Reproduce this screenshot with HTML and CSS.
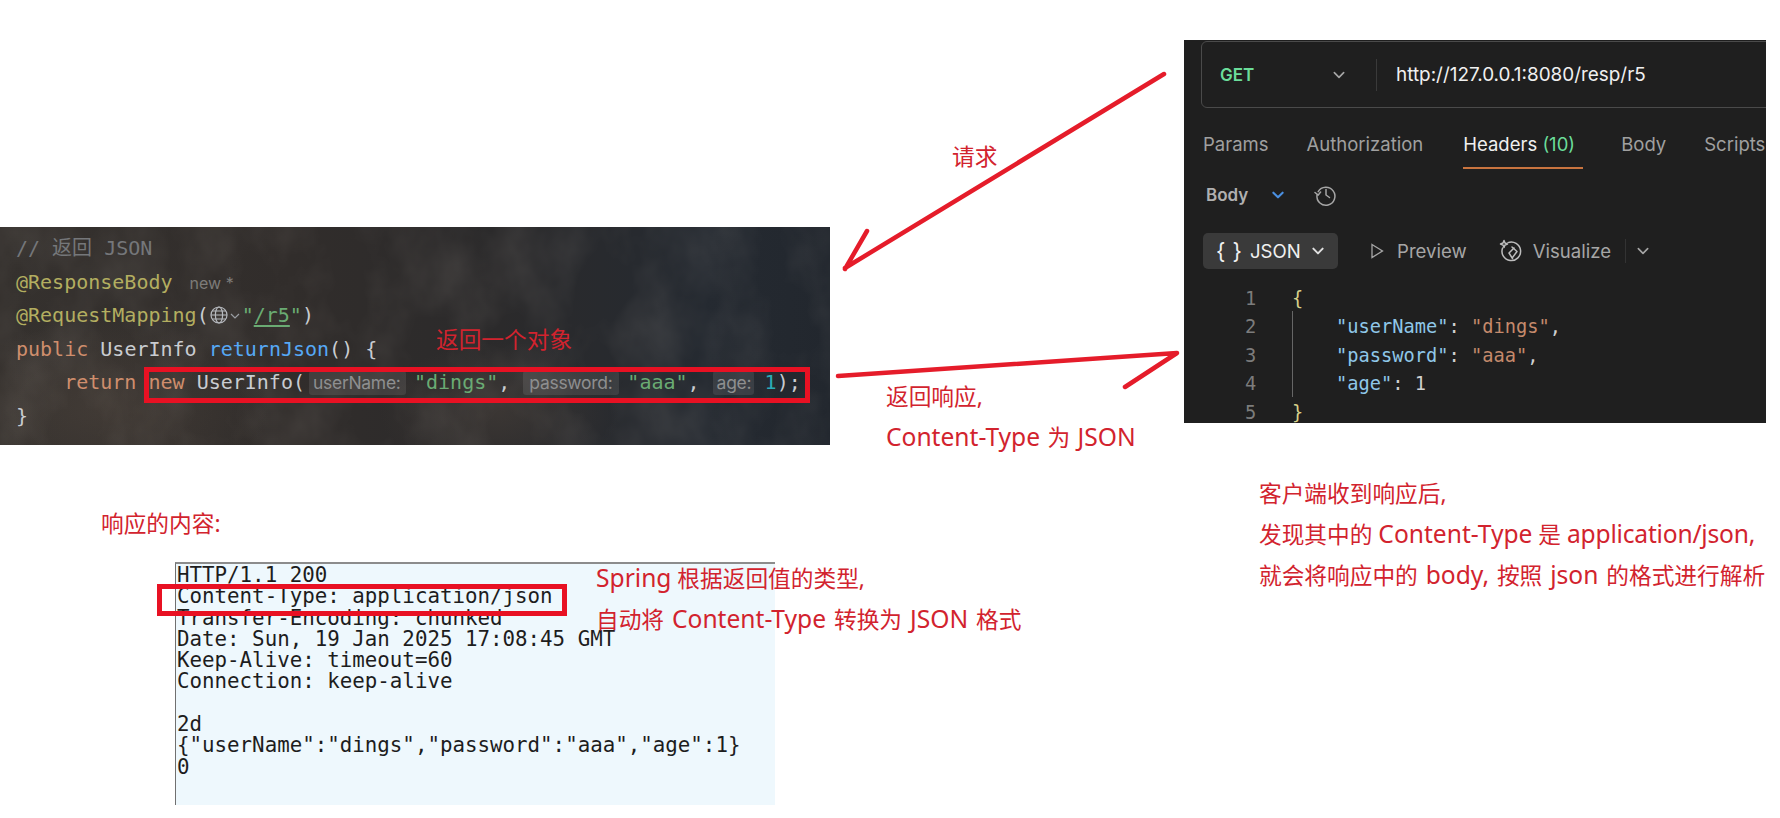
FILE: index.html
```html
<!DOCTYPE html>
<html lang="zh-CN">
<head>
<meta charset="utf-8">
<title>Spring JSON 响应</title>
<link rel="stylesheet" href="styles.css">
</head>
<body>
<main class="canvas">

  <section class="ide">
    <svg class="fur" width="830" height="218">
      <filter id="furnoise" x="0" y="0" width="100%" height="100%">
        <feTurbulence type="fractalNoise" baseFrequency="0.016 0.012" numOctaves="4" seed="7"/>
        <feColorMatrix type="matrix" values="0 0 0 0 0.62  0 0 0 0 0.56  0 0 0 0 0.50  1.6 0 0 0 -0.62"/>
      </filter>
      <rect width="830" height="218" filter="url(#furnoise)"/>
    </svg>
    <div class="ln"><span class="cm">// 返回 JSON</span></div>
    <div class="ln"><span class="an">@ResponseBody</span><span class="author">new *</span></div>
    <div class="ln"><span class="an">@RequestMapping</span><span class="tx">(</span><svg class="globe" viewBox="0 0 20 20"><circle cx="10" cy="10" r="8"/><ellipse cx="10" cy="10" rx="3.6" ry="8"/><path d="M2 10h16M3.2 6h13.6M3.2 14h13.6"/></svg><svg class="mini" viewBox="0 0 12 12"><path d="M2 4l4 4 4-4"/></svg><span class="st">"<u>/r5</u>"</span><span class="tx">)</span></div>
    <div class="ln"><span class="kw">public</span> <span class="tx">UserInfo</span> <span class="fn">returnJson</span><span class="tx">() {</span></div>
    <div class="ln"><span class="kw">    return new</span> <span class="tx">UserInfo(</span><span class="hint h1">userName:</span><span class="st">"dings"</span><span class="tx">,</span><span class="hint h2">password:</span><span class="st">"aaa"</span><span class="tx">,</span><span class="hint h3">age:</span><span class="nu">1</span><span class="tx">);</span></div>
    <div class="ln"><span class="tx">}</span></div>
  </section>

  <section class="postman">
    <div class="urlbar">
      <span class="method">GET</span>
      <svg class="chev chev-get" viewBox="0 0 12 12"><path d="M2 4l4 4 4-4"/></svg>
      <span class="urlsep"></span>
      <span class="url">http://127.0.0.1:8080/resp/r5</span>
    </div>
    <nav class="tabs">
      <span class="tab t-params">Params</span>
      <span class="tab t-auth">Authorization</span>
      <span class="tab t-head">Headers <em>(10)</em></span>
      <span class="tab t-body">Body</span>
      <span class="tab">Scripts</span>
    </nav>
    <div class="bodyrow">
      <span class="bodylabel">Body</span>
      <svg class="chev chev-blue" viewBox="0 0 12 12"><path d="M2 4l4 4 4-4"/></svg>
      <svg class="history" viewBox="0 0 24 24"><path d="M4.2 8.6A9 9 0 1 1 3 12"/><path d="M1 9.5l3.2 2.6L6.6 9"/><path d="M12 6.5V12l3.5 2.5"/></svg>
    </div>
    <div class="viewrow">
      <span class="jsonbtn"><span class="braces">{ }</span> JSON <svg class="chev chev-json" viewBox="0 0 12 12"><path d="M2 4l4 4 4-4"/></svg></span>
      <svg class="play" viewBox="0 0 16 16"><path d="M3 1.500l10.500 6.500L3 14.500z"/></svg>
      <span class="viewopt v-prev">Preview</span>
      <svg class="viz" viewBox="0 0 24 24"><path d="M9 3.600A9.300 9.300 0 1 1 3.600 9"/><path d="M15 9l-5 5 3.500 5.500"/><path d="M13 8l5 4.500-4.500 6"/><path d="M5 1.500l1 2.500 2.500 1-2.500 1-1 2.500-1-2.500-2.500-1 2.500-1z"/></svg>
      <span class="viewopt">Visualize</span>
      <span class="viewsep"></span>
      <svg class="chev chev-view" viewBox="0 0 12 12"><path d="M2 4l4 4 4-4"/></svg>
    </div>
    <div class="jsoncode">
      <div class="jl"><span class="num">1</span><span class="br">{</span></div>
      <div class="jl"><span class="num">2</span><span class="ind"><span class="key">"userName"</span><span class="pl">: </span><span class="sv">"dings"</span><span class="pl">,</span></span></div>
      <div class="jl"><span class="num">3</span><span class="ind"><span class="key">"password"</span><span class="pl">: </span><span class="sv">"aaa"</span><span class="pl">,</span></span></div>
      <div class="jl"><span class="num">4</span><span class="ind"><span class="key">"age"</span><span class="pl">: 1</span></span></div>
      <div class="jl"><span class="num">5</span><span class="br">}</span></div>
      <span class="guide"></span>
    </div>
  </section>

  <pre class="raw">HTTP/1.1 200
Content-Type: application/json
Transfer-Encoding: chunked
Date: Sun, 19 Jan 2025 17:08:45 GMT
Keep-Alive: timeout=60
Connection: keep-alive

2d
{"userName":"dings","password":"aaa","age":1}
0</pre>

  <div class="box box-code"></div>
  <div class="box box-raw"></div>

  <svg class="arrows" viewBox="0 0 1780 818">
    <path d="M1164 74L845 268M867 231L845 269"/>
    <path d="M838 376L1177 353L1125 387"/>
  </svg>

  <p class="note n-obj">返回一个对象</p>
  <p class="note n-req">请求</p>
  <p class="note n-resp">返回响应,<br><span class="mid"><span class="lat">Content-Type</span> 为 <span class="lat">JSON</span></span></p>
  <p class="note n-body">响应的内容:</p>
  <p class="note n-spring"><span class="lat">Spring</span> 根据返回值的类型,<br><span class="wide">自动将 <span class="lat">Content-Type</span> 转换为 <span class="lat">JSON</span> 格式</span></p>
  <p class="note n-client">客户端收到响应后,<br>发现其中的 <span class="lat">Content-Type</span> 是 <span class="lat tight">application/json,</span><br><span class="wide">就会将响应中的 <span class="lat">body,</span> 按照 <span class="lat">json</span> 的格式进行解析</span></p>

</main>
</body>
</html>
```
FILE: styles.css
```css
* { box-sizing: border-box; }
html, body { margin: 0; padding: 0; background: #fff; }
.canvas { position: relative; width: 1780px; height: 818px; overflow: hidden; background: #fff; }

/* IDE screenshot */
.ide {
  position: absolute; left: 0; top: 227px; width: 830px; height: 218px;
  padding: 5px 0 0 16px;
  font: 20px/33.6px "DejaVu Sans Mono", "Noto Sans CJK SC", monospace;
  background:
    radial-gradient(ellipse 120px 70px at 500px 185px, rgba(74,66,60,.5), transparent),
    radial-gradient(ellipse 160px 90px at 110px 180px, rgba(92,80,70,.35), transparent),
    linear-gradient(90deg, #35312e 0%, #312d2b 35%, #2b2a2b 60%, #252a31 85%, #22272e 100%);
}
.fur { position: absolute; left: 0; top: 0; opacity: .13; }
.ln { position: relative; height: 33.6px; white-space: pre; }
.cm { color: #75777a; }
.an { color: #b3ae60; }
.tx { color: #c9ccd1; }
.kw { color: #cf8e6d; }
.fn { color: #56a8f5; }
.st { color: #6aab73; }
.nu { color: #2aacb8; }
.st u { text-underline-offset: 3px; }
.author { margin-left: 17px; font: 16px "Inter", sans-serif; color: #7d7b78; }
.globe { width: 20px; height: 20px; fill: none; stroke: #b8bbc0; stroke-width: 1.2; vertical-align: -3px; }
.mini { width: 12px; height: 12px; fill: none; stroke: #9a9da2; stroke-width: 1.2; margin-right: 1px; vertical-align: 0; }
.hint {
  display: inline-block; font: 17.500px/24px "Inter", sans-serif; letter-spacing: -.3px; color: #8e8f90;
  background: rgba(255,255,255,.09); border-radius: 3px; padding: 0 0 0 4px;
  height: 24px; white-space: nowrap;
}
.h1 { margin: 0 8px 0 4px; width: 97px; }
.h2 { margin: 0 8px 0 13px; width: 96px; padding-left: 6px; }
.h3 { margin: 0 11px 0 13px; width: 41px; }

/* Postman screenshot */
.postman {
  position: absolute; left: 1184px; top: 40px; width: 582px; height: 383px;
  overflow: hidden; background: #1f1f1f; color: #a6a6a6;
  font-family: "Inter", sans-serif;
}
.urlbar {
  display: flex; align-items: center; height: 67px; margin: 1px 0 0 17px; width: 600px;
  border: 1px solid #4a4a4a; border-radius: 6px; padding-left: 18px;
}
.method { color: #6bdd9a; font-size: 17px; font-weight: 600; width: 112px; }
.chev { fill: none; stroke: #a6a6a6; stroke-width: 1.4; stroke-linecap: round; stroke-linejoin: round; width: 14px; height: 14px; }
.urlsep { width: 1px; height: 32px; background: #3a3a3a; margin: 0 19px 0 30px; }
.url { color: #f0f0f0; font-size: 18.900px; }
.tabs { display: flex; height: 58px; margin-top: 7px; padding: 0 0 0 19px; font-size: 18.500px; white-space: nowrap; align-items: center; }
.tab { color: #a0a0a0; }
.t-params { margin-right: 38px; }
.t-auth { margin-right: 40px; }
.t-head { color: #f0f0f0; margin-right: 38px; position: relative; line-height: 58px; width: 120px; }
.t-head::after { content: ""; position: absolute; left: 0; right: 0; top: 52px; height: 2px; background: #c9743f; }
.t-head em { font-style: normal; color: #6bdd9a; }
.t-body { margin-right: 38px; }
.bodyrow { display: flex; align-items: center; margin-top: 6px; height: 32px; padding-left: 22px; }
.bodylabel { font-size: 17px; font-weight: 600; color: #b0b0b0; margin-right: 23px; }
.chev-blue { stroke: #4a8fe0; stroke-width: 1.8; margin-right: 29px; }
.history { width: 24px; height: 24px; fill: none; stroke: #a6a6a6; stroke-width: 1.5; stroke-linecap: round; stroke-linejoin: round; }
.viewrow { display: flex; align-items: center; height: 36px; margin-top: 22px; padding-left: 19px; font-size: 18.600px; }
.jsonbtn {
  display: flex; align-items: center; width: 135px; height: 36px; padding-left: 13px;
  background: #3a3a3a; border-radius: 5px; color: #f0f0f0;
}
.braces { font-size: 22px; margin-right: 8px; word-spacing: 1px; }
.chev-json { stroke: #e0e0e0; margin-left: 10px; stroke-width: 1.7; }
.play { width: 16px; height: 16px; fill: none; stroke: #a6a6a6; stroke-width: 1.3; margin: 0 12px 0 31px; }
.viewopt { color: #a6a6a6; }
.v-prev { margin-right: 32px; }
.viz { width: 24px; height: 24px; fill: none; stroke: #bdbdbd; stroke-width: 1.5; stroke-linejoin: round; stroke-linecap: round; margin-right: 10px; }
.viewsep { width: 1px; height: 24px; background: #333; margin: 0 10px 0 14px; }
.jsoncode { position: relative; margin-top: 16px; font: 18.700px/28.400px "DejaVu Sans Mono", monospace; }
.jl { display: flex; height: 28.4px; white-space: pre; }
.num { width: 112px; padding-left: 61px; color: #7c7c7c; }
.br { color: #d8d08a; margin-left: -4px; }
.ind { padding-left: 40px; }
.key { color: #8fc7e8; }
.sv { color: #c58a6c; }
.pl { color: #d0d0d0; }
.guide { position: absolute; left: 108px; top: 26px; width: 1px; height: 86px; background: #666; }

/* Raw HTTP response */
.raw {
  position: absolute; left: 175px; top: 562px; width: 600px; height: 243px; margin: 0; padding: 1px 0 0 1px;
  border-top: 2px solid #8c8c8c; border-left: 1px solid #707070;
  background: #eef8fd;
  font: 20.800px/21.300px "DejaVu Sans Mono", monospace; color: #1d1d1d;
  overflow: hidden;
}

/* Annotation layer */
.box { position: absolute; border: 5px solid #e81123; background: transparent; }
.box-code { left: 144px; top: 367px; width: 666px; height: 36px; }
.box-raw { left: 157px; top: 584px; width: 410px; height: 32px; }
.arrows { position: absolute; inset: 0; width: 1780px; height: 818px; fill: none; stroke: #e51c2a; stroke-width: 4.500px; stroke-linecap: round; stroke-linejoin: round; }

.note {
  position: absolute; margin: 0; color: #d2232e; white-space: nowrap;
  font: 22.700px/40px "Noto Sans", "Noto Sans CJK SC", sans-serif;
}
.lat { font-size: 24.600px; }
.tight { letter-spacing: -.2px; }
.wide { word-spacing: 2px; }
.mid { word-spacing: 1.500px; }
.n-obj { left: 436px; top: 320px; }
.n-req { left: 952px; top: 137px; }
.n-resp { left: 886px; top: 377px; }
.n-body { left: 101px; top: 504px; }
.n-spring { left: 596px; top: 558px; }
.n-client { left: 1259px; top: 474px; }
```
